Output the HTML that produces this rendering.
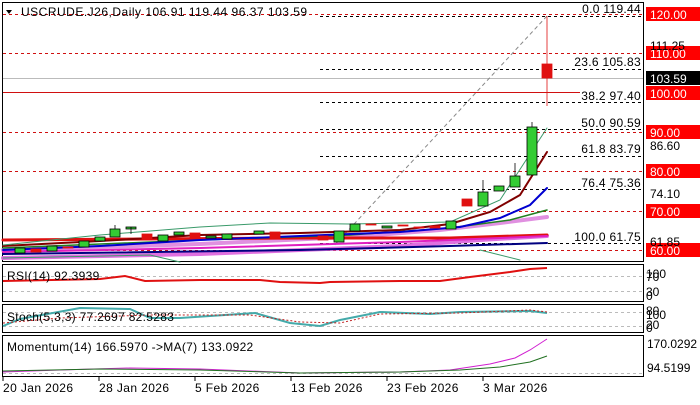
<!DOCTYPE html><html><head><style>
body{margin:0;background:#fff;width:700px;height:400px;overflow:hidden;font-family:"Liberation Sans",sans-serif}
svg text{font-family:"Liberation Sans",sans-serif;font-size:12px}
</style></head><body>
<svg width="700" height="400" viewBox="0 0 700 400">
<rect width="700" height="400" fill="#fff"/>
<g fill="none" stroke="#000" stroke-width="1">
<rect x="2.5" y="2.5" width="641" height="259"/>
<rect x="2.5" y="264.5" width="641" height="37"/>
<rect x="2.5" y="304.5" width="641" height="28"/>
<rect x="2.5" y="335.5" width="641" height="41"/>
</g>
<g stroke="#d01010" stroke-dasharray="3,3" stroke-width="1">
<line x1="3" y1="14.5" x2="643" y2="14.5"/>
<line x1="3" y1="53.5" x2="643" y2="53.5"/>
<line x1="3" y1="132.5" x2="643" y2="132.5"/>
<line x1="3" y1="171.5" x2="643" y2="171.5"/>
<line x1="3" y1="211.5" x2="643" y2="211.5"/>
<line x1="3" y1="250.5" x2="643" y2="250.5"/>
</g>
<line x1="3" y1="78.5" x2="643" y2="78.5" stroke="#bbb"/>
<line x1="3" y1="92.5" x2="580" y2="92.5" stroke="#d01010"/>
<g stroke="#000" stroke-dasharray="3,3">
<line x1="320" y1="16.5" x2="643" y2="16.5"/>
<line x1="320" y1="69.5" x2="643" y2="69.5"/>
<line x1="320" y1="102.5" x2="643" y2="102.5"/>
<line x1="320" y1="129.5" x2="643" y2="129.5"/>
<line x1="320" y1="156.5" x2="643" y2="156.5"/>
<line x1="320" y1="189.5" x2="643" y2="189.5"/>
<line x1="320" y1="243.5" x2="643" y2="243.5"/>
</g>
<line x1="330" y1="250" x2="547" y2="16" stroke="#888" stroke-dasharray="4,3"/>
<g text-anchor="end" fill="#000" letter-spacing="0.3">
<text x="641" y="13">0.0 119.44</text>
<text x="641" y="66">23.6 105.83</text>
<text x="641" y="100">38.2 97.40</text>
<text x="641" y="127">50.0 90.59</text>
<text x="641" y="153">61.8 83.79</text>
<text x="641" y="187">76.4 75.36</text>
<text x="641" y="241">100.0 61.75</text>
</g>
<g fill="none" stroke-linecap="round">
<path d="M3 258 L200 254 L400 246 L480 240 L547 236" stroke="#e070e0" stroke-width="4"/>
<path d="M3 250 L200 244 L350 237 L440 230 L500 223 L547 217" stroke="#e090e0" stroke-width="4"/>
<path d="M3 240 L300 238 L450 238 L547 235" stroke="#e01010" stroke-width="3"/>
<path d="M3 252 L200 248 L400 242 L500 238 L547 236" stroke="#e020c0" stroke-width="2"/>
<path d="M3 254 L300 250 L450 246 L547 243" stroke="#000080" stroke-width="2"/>
<path d="M3 248 L200 240 L350 235 L450 228 L510 220 L547 210" stroke="#208020" stroke-width="1.5"/>
<path d="M3 250 L100 246 L200 240 L300 236 L400 232 L460 227 L500 218 L530 205 L547 188" stroke="#0000d0" stroke-width="2"/>
<path d="M3 246 L100 241 L200 235 L300 233 L400 230 L450 224 L490 212 L520 195 L547 152" stroke="#800000" stroke-width="2"/>
<path d="M3 245 L100 235 L200 227 L270 223 L350 224 L450 222 L500 200 L547 128" stroke="#3a9a6a" stroke-width="1"/>
<path d="M3 258 L150 255 L180 262 M480 250 L520 260" stroke="#3a9a6a" stroke-width="1"/>
</g>
<g stroke="#000" stroke-width="0.8">
<g fill="#33cc33">
<rect x="15" y="248" width="10" height="5"/><rect x="47" y="246" width="10" height="5"/>
<rect x="79" y="241" width="10" height="6"/><rect x="95" y="237" width="10" height="4"/>
<rect x="110" y="229" width="10" height="8"/><rect x="126" y="227" width="10" height="2"/>
<rect x="158" y="235" width="10" height="6"/><rect x="174" y="232" width="10" height="3"/>
<rect x="206" y="236" width="10" height="2"/><rect x="222" y="234" width="10" height="5"/>
<rect x="254" y="231" width="10" height="3"/><rect x="334" y="231" width="10" height="11"/>
<rect x="350" y="224" width="10" height="7"/><rect x="382" y="226" width="10" height="2"/>
<rect x="446" y="221" width="10" height="8"/><rect x="478" y="192" width="10" height="14"/>
<rect x="494" y="186" width="10" height="5"/><rect x="510" y="176" width="10" height="11"/>
<rect x="527" y="127" width="10" height="48"/>
</g>
<g fill="#e01010" stroke="#e01010">
<rect x="31" y="249" width="10" height="3"/><rect x="63" y="247" width="10" height="1"/>
<rect x="142" y="234" width="10" height="6"/><rect x="190" y="233" width="10" height="5"/>
<rect x="270" y="232" width="10" height="7"/><rect x="318" y="236" width="10" height="4"/>
<rect x="366" y="224" width="10" height="1"/><rect x="398" y="225" width="10" height="1"/>
<rect x="414" y="227" width="10" height="1"/><rect x="430" y="226" width="10" height="2"/>
<rect x="462" y="199" width="10" height="7"/><rect x="542" y="64" width="10" height="14"/>
</g>
<line x1="547" y1="16" x2="547" y2="106" stroke="#e01010"/>
<line x1="532" y1="122" x2="532" y2="127"/><line x1="515" y1="163" x2="515" y2="176"/>
<line x1="483" y1="180" x2="483" y2="192"/><line x1="115" y1="225" x2="115" y2="229"/>
<line x1="131" y1="227" x2="131" y2="234"/>
</g>
<g fill="#ff0000"><rect x="646" y="7" width="54" height="14"/><rect x="646" y="46" width="54" height="14"/><rect x="646" y="86" width="54" height="14"/><rect x="646" y="125" width="54" height="14"/><rect x="646" y="164" width="54" height="14"/><rect x="646" y="204" width="54" height="14"/><rect x="646" y="243" width="54" height="14"/></g>
<rect x="646" y="71" width="54" height="14" fill="#000"/>
<g fill="#fff" style="font-size:13px"><text x="650" y="19">120.00</text><text x="650" y="58">110.00</text><text x="650" y="83">103.59</text><text x="650" y="98">100.00</text><text x="650" y="137">90.00</text><text x="650" y="176">80.00</text><text x="650" y="216">70.00</text><text x="650" y="255">60.00</text></g>
<g fill="#000" style="font-size:12px"><text x="650" y="50">111.25</text><text x="650" y="150">86.60</text><text x="650" y="198">74.10</text><text x="650" y="246">61.85</text></g>
<g stroke="#bbb" stroke-dasharray="3,3"><line x1="3" y1="276.5" x2="643" y2="276.5"/><line x1="3" y1="291.5" x2="643" y2="291.5"/><line x1="3" y1="312.5" x2="643" y2="312.5"/><line x1="3" y1="326.5" x2="643" y2="326.5"/><line x1="3" y1="373.5" x2="643" y2="373.5"/></g>
<path d="M3 281 L100 279 L125 276 L145 281 L200 280 L260 280 L280 282 L320 283 L330 282 L400 281 L440 281 L470 277 L510 272 L530 269 L547 268" fill="none" stroke="#e01010" stroke-width="2"/>
<text x="7" y="280" fill="#000" letter-spacing="0.3">RSI(14) 92.3939</text>
<g fill="#000" style="font-size:11px"><text x="646" y="278">100</text><text x="646" y="281">70</text><text x="646" y="296">30</text><text x="646" y="300">0</text></g>
<path d="M3 326 L20 319 L80 308 L130 309 L150 318 L180 318 L255 313 L290 323 L320 326 L340 320 L380 312 L430 314 L460 312 L530 311 L547 313" fill="none" stroke="#44aaaa" stroke-width="2"/>
<path d="M3 323 L60 318 L150 315 L250 315 L300 322 L340 323 L380 314 L460 313 L530 310 L547 312" fill="none" stroke="#c02020" stroke-dasharray="2,2"/>
<text x="7" y="321" fill="#000" letter-spacing="0.3">Stoch(5,3,3) 77.2697 82.5283</text>
<g fill="#000" style="font-size:11px"><text x="646" y="315">80</text><text x="646" y="319">100</text><text x="646" y="329">20</text><text x="646" y="332">0</text></g>
<path d="M3 372 L60 370 L130 368 L200 369 L300 373 L400 372 L450 370 L490 364 L515 358 L530 350 L547 339" fill="none" stroke="#d020d0"/>
<path d="M3 371 L100 369 L200 370 L300 373 L400 372 L460 370 L500 367 L530 362 L547 356" fill="none" stroke="#207020"/>
<text x="7" y="351" fill="#000" letter-spacing="0.3">Momentum(14) 166.5970  -&gt;MA(7) 133.0922</text>
<g fill="#000"><text x="647" y="348">170.0292</text><text x="647" y="372">94.5199</text></g>
<g stroke="#000"><line x1="3" y1="377" x2="3" y2="381"/><line x1="99" y1="377" x2="99" y2="381"/><line x1="195" y1="377" x2="195" y2="381"/><line x1="291" y1="377" x2="291" y2="381"/><line x1="387" y1="377" x2="387" y2="381"/><line x1="483" y1="377" x2="483" y2="381"/></g>
<g fill="#000" letter-spacing="0.4"><text x="3" y="392">20 Jan 2026</text><text x="99" y="392">28 Jan 2026</text><text x="195" y="392">5 Feb 2026</text><text x="291" y="392">13 Feb 2026</text><text x="387" y="392">23 Feb 2026</text><text x="483" y="392">3 Mar 2026</text></g>
<path d="M6 10 L12 10 L9 14 Z" fill="#000"/>
<text x="21" y="16" fill="#000" letter-spacing="0.5">USCRUDE.J26,Daily  106.91 119.44 96.37 103.59</text>
</svg>
</body></html>
